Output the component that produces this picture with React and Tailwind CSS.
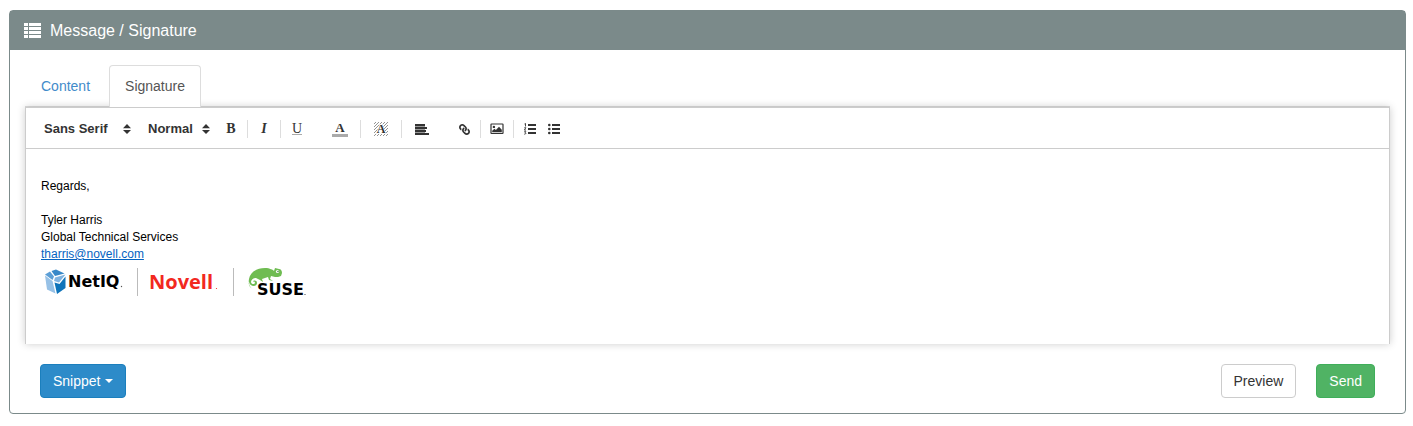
import { FaLink } from "react-icons/fa";

const iconButton =
  "flex h-6 w-6 items-center justify-center text-[#333] hover:text-[#06c]";
const serifGlyph = "font-['Liberation_Serif',serif] font-bold";

function ListIcon() {
  return (
    <svg width="18" height="16" viewBox="0 0 18 16" fill="#fff" shapeRendering="crispEdges" aria-hidden="true">
      {[0, 4, 8, 12].map((y) => (
        <g key={y}>
          <rect x="0" y={y} width="4" height="3" />
          <rect x="5" y={y} width="12" height="3" />
        </g>
      ))}
    </svg>
  );
}

function Separator() {
  return <span className="mx-1 h-[18px] w-px shrink-0 bg-[#ddd]" aria-hidden="true" />;
}

function Picker({ label, options, className }) {
  return (
    <div className={`relative flex items-center ${className}`}>
      <select
        aria-label={label}
        className="h-6 w-full appearance-none bg-transparent px-2 text-[13px] leading-6 font-bold text-[#333] outline-none"
      >
        {options.map((o) => (
          <option key={o}>{o}</option>
        ))}
      </select>
      <svg className="pointer-events-none absolute right-1" width="10" height="10" viewBox="0 0 10 10" fill="#333" aria-hidden="true">
        <path d="M1 4.3 5 0l4 4.3zM1 5.9h8L5 10z" />
      </svg>
    </div>
  );
}

function ShadedA() {
  return (
    <svg width="14" height="14" viewBox="0 0 14 14" aria-hidden="true">
      <path
        d="M0 2 2 0M0 5 5 0M0 8 8 0M0 11 11 0M0 14 14 0M3 14 14 3M6 14 14 6M9 14 14 9M12 14 14 12"
        stroke="#888"
        strokeWidth="0.9"
      />
      <path d="M2 12 5.500 2h3L12 12z" fill="#fff" />
      <text x="7" y="11" textAnchor="middle" fontFamily="Liberation Serif, serif" fontWeight="bold" fontSize="12" fill="#333">A</text>
    </svg>
  );
}

function AlignIcon() {
  return (
    <svg width="14" height="12" viewBox="0 0 14 12" fill="#333" shapeRendering="crispEdges" aria-hidden="true">
      <rect x="0" y="1" width="10" height="10" fill="#999" />
      <rect x="0" y="1" width="10" height="2" />
      <rect x="0" y="4" width="12" height="2" />
      <rect x="0" y="7" width="11" height="2" />
      <rect x="0" y="10" width="14" height="2" />
    </svg>
  );
}

function ImageIcon() {
  return (
    <svg width="14" height="12" viewBox="0 0 14 12" aria-hidden="true">
      <rect x="1" y="1" width="12" height="9.500" rx=".5" fill="#fff" stroke="#333" strokeWidth="1.200" />
      <circle cx="3.900" cy="3.900" r="1.200" fill="#333" />
      <path d="M2.200 9.300V7.700l2.200-2 1.500 1.300L9 3.700l2.800 3v2.600z" fill="#333" />
    </svg>
  );
}

function BulletIcon({ ordered }) {
  return (
    <svg width="12" height="12" viewBox="0 0 12 12" fill="#333" aria-hidden="true">
      <g shapeRendering="crispEdges">
        <rect x="4" y="1" width="8" height="2" />
        <rect x="4" y="5" width="8" height="2" />
        <rect x="4" y="9" width="8" height="2" />
      </g>
      {ordered ? (
        <path d="M.5 1 1.5.4V3.5M.3 4.700h1.500L.4 7.100h1.600M.3 8.600h1.500L1 9.800c1.200 0 1 1.700-.8 1.300" fill="none" stroke="#333" strokeWidth=".9" />
      ) : (
        <g>
          <circle cx="1.300" cy="2" r="1.300" />
          <circle cx="1.300" cy="6" r="1.300" />
          <circle cx="1.300" cy="10" r="1.300" />
        </g>
      )}
    </svg>
  );
}

function Toolbar() {
  return (
    <div role="toolbar" aria-label="Formatting" className="flex flex-wrap items-center border-b border-[#ccc] pt-[9px] pb-[7px] pl-[10px]">
      <Picker label="Font" options={["Sans Serif", "Serif", "Monospace"]} className="mr-1 w-[100px]" />
      <Picker label="Size" options={["Normal", "Small", "Large", "Huge"]} className="mr-1 w-[75px]" />
      <button type="button" aria-label="Bold" className={`${iconButton} ${serifGlyph} text-[14px]`}>B</button>
      <Separator />
      <button type="button" aria-label="Italic" className={`${iconButton} ${serifGlyph} text-[14px] italic`}>I</button>
      <Separator />
      <button type="button" aria-label="Underline" className={`${iconButton} mr-[15px]`}>
        <span className="border-b border-[#aaa] font-['Liberation_Serif',serif] text-[14px] leading-[11px]">U</span>
      </button>
      <button type="button" aria-label="Text colour" className={`${iconButton} mx-1`}>
        <span className={`${serifGlyph} w-4 border-b-3 border-[#aaa] text-center text-[13px] leading-[12px]`}>A</span>
      </button>
      <Separator />
      <button type="button" aria-label="Background colour" className={`${iconButton} mx-1`}><ShadedA /></button>
      <Separator />
      <button type="button" aria-label="Alignment" className={`${iconButton} mr-[18px] ml-1`}><AlignIcon /></button>
      <button type="button" aria-label="Link" className={iconButton}>
        <FaLink className="-scale-x-100" size={11} />
      </button>
      <Separator />
      <button type="button" aria-label="Image" className={iconButton}><ImageIcon /></button>
      <Separator />
      <button type="button" aria-label="Numbered list" className={iconButton}><BulletIcon ordered /></button>
      <button type="button" aria-label="Bulleted list" className={iconButton}><BulletIcon /></button>
    </div>
  );
}

function Logos() {
  return (
    <svg width="268" height="32" viewBox="0 0 268 32" role="img" aria-label="NetIQ, Novell, SUSE">
      <path d="M4 9.500 11.500 15 14.500 27.500 6 23.500z" fill="#97c1e6" />
      <path d="M4 8.500 9 5.500 13 10.500 11.500 14z" fill="#5c9fd6" />
      <path d="M10.500 5 15 3.500l8.500 4L14 10z" fill="#3788c8" />
      <path d="M14 11.500 24.500 8.500 18 16.500 13 15z" fill="#7fb3e0" />
      <path d="M24.500 10.500V22l-8.500 6-2.500-11.500 5 1.500z" fill="#0f74ba" />
      <text x="27" y="21" fontFamily="DejaVu Sans, sans-serif" fontWeight="bold" fontSize="16" fill="#000">NetIQ</text>
      <circle cx="80.500" cy="20.500" r=".7" fill="#555" />
      <path d="M96.500 2v28M192.500 2v28" stroke="#bbb" />
      <text x="108" y="23" fontFamily="Open Sans, sans-serif" fontWeight="bold" fontSize="20" fill="#f2291f">Novell</text>
      <circle cx="175.500" cy="22.500" r=".6" fill="#f2291f" />
      <path
        d="M213 24c-4-2-6-6-5-11 1-7 8-11 16-11 5 0 8 2 9 3l1-3 4 1c2 0 3 2 3 4l-1 3c-2 1-4 1-6 1l-4-1-1 3 3 2-4-1-1-3-6 2 1 3-3-2-4-2c-3 0-5 2-5 4s3 3 4 1c0-1-1-2-2-1 0-2 4-2 4 1 0 4-7 4-8-1-1 3 1 6 5 8z"
        fill="#6fbc52"
      />
      <circle cx="236.500" cy="5.500" r="1.600" fill="#fff" />
      <circle cx="237" cy="5.500" r=".7" fill="#2a6b2a" />
      <text x="216" y="29" fontFamily="DejaVu Sans, sans-serif" fontWeight="bold" fontSize="16" fill="#000">SUSE</text>
      <circle cx="264" cy="28.500" r=".6" fill="#333" />
    </svg>
  );
}

export default function App() {
  return (
    <main className="pt-[10px] pr-[7px] pl-[9px] font-['Liberation_Sans',sans-serif] text-sm text-[#333]">
      <section className="rounded border border-[#7b8a8a] bg-white">
        <header className="flex items-center gap-2 bg-[#7b8a8a] px-[14px] pt-2 pb-[7px] text-white">
          <ListIcon />
          <h1 className="text-base">Message / Signature</h1>
        </header>

        <div className="p-[15px]">
          <div role="tablist" className="flex border-b border-[#ddd]">
            <button type="button" role="tab" aria-selected="false" className="mr-[3px] px-4 pt-[11px] pb-[10px] leading-5 text-[#428bca]">
              Content
            </button>
            <button
              type="button"
              role="tab"
              aria-selected="true"
              className="relative z-10 -mb-px rounded-t border border-b-0 border-[#ddd] bg-white px-[15px] pt-[10px] pb-[11px] leading-5 text-[#555]"
            >
              Signature
            </button>
          </div>

          <div className="border border-b-0 border-[#ccc] bg-white shadow-[0_0_8px_rgba(0,0,0,0.2)]">
            <Toolbar />
            <div
              contentEditable
              suppressContentEditableWarning
              role="textbox"
              aria-label="Signature"
              className="px-[15px] pt-[29px] pb-[46px] text-[12px] leading-[17px] text-black outline-none"
            >
              <p>Regards,</p>
              <p className="mt-[17px]">Tyler Harris</p>
              <p>Global Technical Services</p>
              <p>
                <a href="mailto:tharris@novell.com" className="text-[#0563c1] underline">tharris@novell.com</a>
              </p>
              <div className="pt-[3px]"><Logos /></div>
            </div>
          </div>

          <footer className="flex items-center gap-5 px-[15px] pt-5">
            <button type="button" className="mr-auto flex items-center gap-[5px] rounded border border-[#1b7fbd] bg-[#2d8bc9] px-3 py-[6px] leading-5 text-white">
              Snippet
              <svg width="8" height="4" viewBox="0 0 8 4" fill="#fff" aria-hidden="true"><path d="M0 0h8L4 4z" /></svg>
            </button>
            <button type="button" className="rounded border border-[#ccc] bg-white px-3 py-[6px] leading-5">Preview</button>
            <button type="button" className="rounded border border-[#3fae5a] bg-[#50b364] px-3 py-[6px] leading-5 text-white">Send</button>
          </footer>
        </div>
      </section>
    </main>
  );
}
